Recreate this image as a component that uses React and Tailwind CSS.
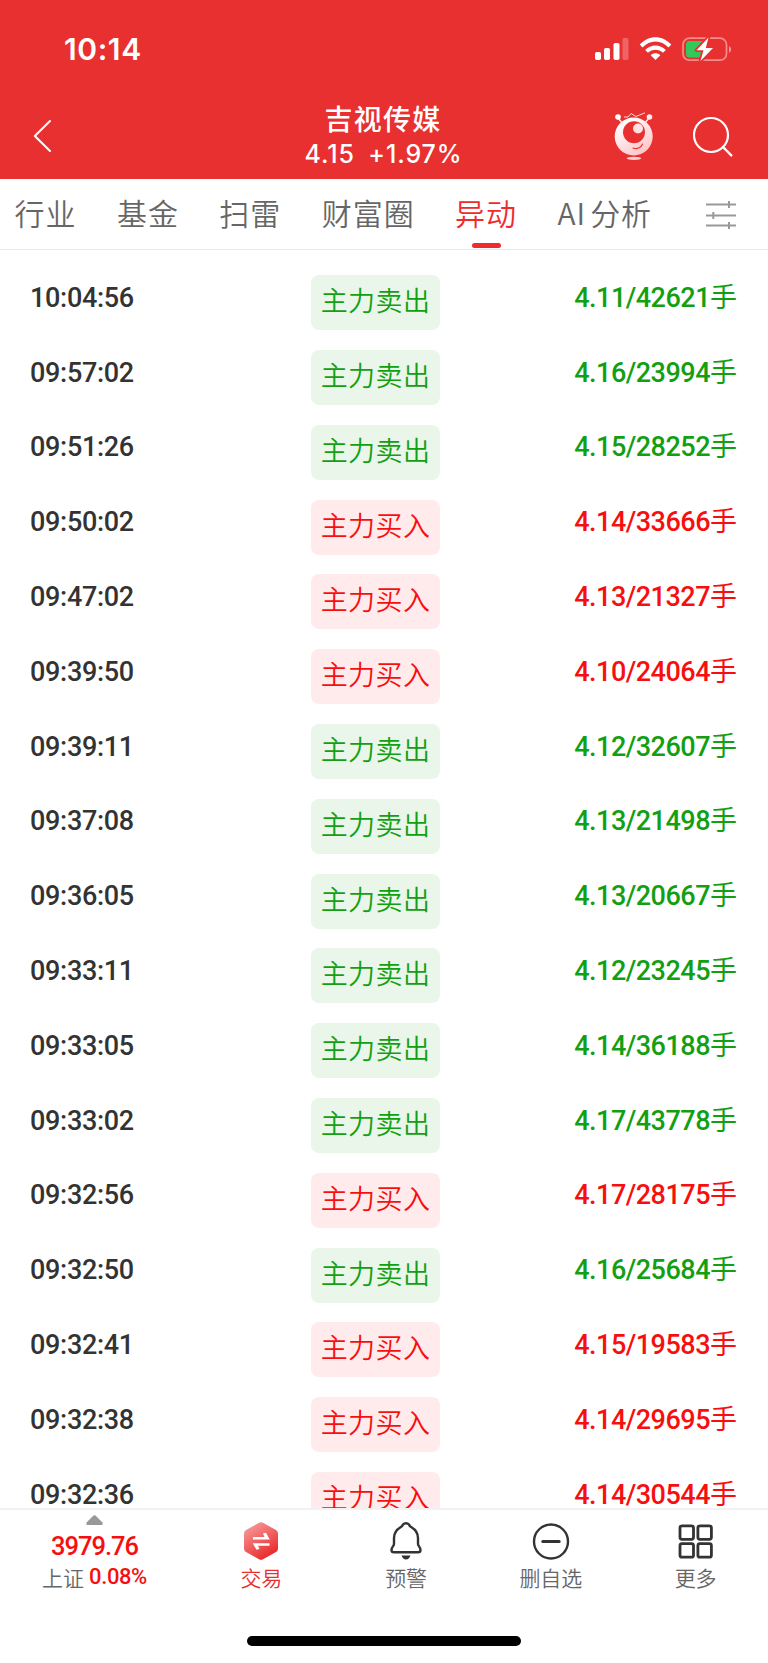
const tradeColors = {
  sell: 'text-[#12a012]',
  buy: 'text-[#f70f0f]',
};

const badgeColors = {
  sell: 'bg-[#eaf6ea] text-[#12a012]',
  buy: 'bg-[#ffebeb] text-[#f70f0f]',
};

const trades = [
  { time: '10:04:56', type: 'sell', value: '4.11/42621' },
  { time: '09:57:02', type: 'sell', value: '4.16/23994' },
  { time: '09:51:26', type: 'sell', value: '4.15/28252' },
  { time: '09:50:02', type: 'buy', value: '4.14/33666' },
  { time: '09:47:02', type: 'buy', value: '4.13/21327' },
  { time: '09:39:50', type: 'buy', value: '4.10/24064' },
  { time: '09:39:11', type: 'sell', value: '4.12/32607' },
  { time: '09:37:08', type: 'sell', value: '4.13/21498' },
  { time: '09:36:05', type: 'sell', value: '4.13/20667' },
  { time: '09:33:11', type: 'sell', value: '4.12/23245' },
  { time: '09:33:05', type: 'sell', value: '4.14/36188' },
  { time: '09:33:02', type: 'sell', value: '4.17/43778' },
  { time: '09:32:56', type: 'buy', value: '4.17/28175' },
  { time: '09:32:50', type: 'sell', value: '4.16/25684' },
  { time: '09:32:41', type: 'buy', value: '4.15/19583' },
  { time: '09:32:38', type: 'buy', value: '4.14/29695' },
  { time: '09:32:36', type: 'buy', value: '4.14/30544' },
];

const tabs = [
  { id: 'industry', label: '行业' },
  { id: 'fund', label: '基金' },
  { id: 'risk', label: '扫雷' },
  { id: 'circle', label: '财富圈' },
  { id: 'moves', label: '异动' },
  { id: 'ai', prefix: 'AI', label: '分析' },
];

function StatusBar() {
  return (
    <div className="flex h-[98px] items-center justify-between pl-[64px] pr-[36px]">
      <span className="font-['Inter',sans-serif] text-[30px] font-semibold leading-none tracking-[0.6px] text-white">
        10:14
      </span>
      <svg width="138" height="26" viewBox="0 0 138 26" fill="none">
        {/* Signal */}
        <rect x="1" y="16" width="6" height="8" rx="1.8" fill="#fff" />
        <rect x="10" y="12" width="6" height="12" rx="1.8" fill="#fff" />
        <rect x="19.5" y="7" width="6" height="17" rx="1.8" fill="#fff" />
        <rect x="28.5" y="2" width="6" height="22" rx="1.8" fill="#fff" fillOpacity=".25" />
        {/* Wifi */}
        <path d="M45.7 8.6C54.5-1.3 68.5-1.3 77.3 8.6L74.5 11.4C67.4 3.4 55.6 3.4 48.5 11.4Z" fill="#fff" />
        <path d="M51.2 14C57 7.9 66 7.9 71.8 14L69 16.8C64.9 12.6 58.1 12.6 54 16.8Z" fill="#fff" />
        <path d="M56.7 19.3C59.5 16.7 63.5 16.7 66.3 19.3L61.5 24Z" fill="#fff" />
        {/* Battery */}
        <rect x="89" y="2.2" width="43.5" height="22" rx="6.5" stroke="#fff" strokeOpacity=".45" strokeWidth="1.7" />
        <rect x="92" y="5" width="18" height="16.5" rx="3.5" fill="#34c759" />
        <path d="M135 10.2C137.8 11.2 137.8 15.6 135 16.6Z" fill="#fff" fillOpacity=".5" />
        <path
          d="M114.5 1.5L102.5 14.3H109.5L106.5 25L119 12H111.8Z"
          fill="#fff"
          stroke="#e93030"
          strokeWidth="3.6"
          strokeLinejoin="round"
          paintOrder="stroke"
        />
      </svg>
    </div>
  );
}

function RobotIcon() {
  return (
    <svg width="42" height="50" viewBox="0 0 42 50" fill="none">
      <defs>
        <linearGradient id="robot" x1="8" y1="10" x2="30" y2="46" gradientUnits="userSpaceOnUse">
          <stop stopColor="#fff" />
          <stop offset="1" stopColor="#ffbfc2" />
        </linearGradient>
      </defs>
      <path d="M5 6L10 12M36 6L31 12" stroke="#ffe4e4" strokeWidth="1.5" />
      <circle cx="5" cy="5" r="2.8" fill="#fff" />
      <circle cx="36.5" cy="5" r="2.8" fill="#ffe9e9" />
      <path d="M11 5L15 5L18 1.5L23 4.5L32 .8" stroke="#ffd6d6" strokeWidth="1" />
      <circle cx="20.7" cy="24.5" r="19" fill="url(#robot)" />
      <circle cx="21" cy="20.2" r="11" fill="#e93030" />
      <circle cx="25" cy="16.5" r="5" fill="#ffe1e1" />
      <path d="M20 36C24 37.5 28 36 29.5 32" stroke="#e93030" strokeWidth="1.2" strokeLinecap="round" />
      <ellipse cx="21" cy="46.3" rx="7.3" ry="1.6" fill="#ffd0d0" />
    </svg>
  );
}

function Header() {
  return (
    <div className="grid h-[81.4px] grid-cols-3 items-center pl-[33px] pr-[35px]">
      <svg width="20" height="34" viewBox="0 0 20 34" fill="none" className="mt-[-5px]">
        <path d="M17 2L1.8 17L17 32" stroke="#fff" strokeWidth="2" strokeLinecap="round" strokeLinejoin="round" />
      </svg>
      <div className="flex flex-col items-center whitespace-nowrap pb-[6px] text-white">
        <h1 className="font-['Noto_Sans_CJK_SC',sans-serif] text-[28px] font-medium leading-[38px] tracking-[1.2px]">
          吉视传媒
        </h1>
        <p className="flex gap-[13.5px] pl-px font-['Inter',sans-serif] text-[25px] font-medium leading-[35px] tracking-[0.9px]">
          <span>4.15</span>
          <span>+1.97%</span>
        </p>
      </div>
      <div className="mt-[-4px] flex items-center justify-end gap-[38px]">
        <RobotIcon />
        <svg width="40" height="42" viewBox="0 0 40 42" fill="none">
          <circle cx="18" cy="19" r="17" stroke="#fff" strokeWidth="2.2" />
          <path d="M30 31L38.3 39.4" stroke="#fff" strokeWidth="2.4" strokeLinecap="round" />
        </svg>
      </div>
    </div>
  );
}

function TabBar({ active }) {
  return (
    <nav className="flex h-[71px] items-start gap-[40.4px] border-b border-[#e9e9e9] pl-[14.5px] pr-[32px] text-[30px] font-[350] tracking-[1px] text-[#666666]">
      {tabs.map((tab) => (
        <div key={tab.id} className="flex shrink-0 flex-col items-center">
          <span className={`h-[64px] leading-[67px] ${tab.id === active ? 'text-[#ee2c2c]' : ''}`}>
            {tab.prefix && <span className="mr-[4px]">{tab.prefix}</span>}
            {tab.label}
          </span>
          {tab.id === active && <span className="h-[5px] w-[29px] rounded-full bg-[#ee2c2c]" />}
        </div>
      ))}
      <svg width="30" height="30" viewBox="0 0 30 30" fill="none" className="ml-auto mt-[21px] shrink-0">
        <path
          d="M0 4.5H30M23 1V8M0 15.5H30M7.3 12V19M0 25.5H30M23 22V29"
          stroke="#999"
          strokeWidth="2"
        />
      </svg>
    </nav>
  );
}

function TradeRow({ trade }) {
  return (
    <li className="grid h-[74.8px] grid-cols-[281px_129px_1fr] items-center text-[27px]">
      <span className="pb-[9px] font-['Roboto',sans-serif] font-medium leading-none tracking-[-0.3px] text-[#333333]">
        {trade.time}
      </span>
      <span
        className={`h-[55px] rounded-lg text-center font-[350] leading-[50px] tracking-[0.4px] ${badgeColors[trade.type]}`}
      >
        {trade.type === 'sell' ? '主力卖出' : '主力买入'}
      </span>
      <span
        className={`pb-[9px] text-right font-['Roboto','Noto_Sans_CJK_SC',sans-serif] font-medium leading-none tracking-[-0.5px] ${tradeColors[trade.type]}`}
      >
        {trade.value}
        <span className="font-normal tracking-normal">手</span>
      </span>
    </li>
  );
}

function TradeIcon() {
  return (
    <svg width="36" height="38" viewBox="0 0 36 38" fill="none">
      <defs>
        <linearGradient id="hexagon" x1="6" y1="2" x2="28" y2="36" gradientUnits="userSpaceOnUse">
          <stop stopColor="#f79a9a" />
          <stop offset="1" stopColor="#e92424" />
        </linearGradient>
      </defs>
      <path
        d="M16 .8Q18 -.2 20 .8L33 8Q35 9.2 35 11.5V26.5Q35 28.8 33 30L20 37.2Q18 38.2 16 37.2L3 30Q1 28.8 1 26.5V11.5Q1 9.2 3 8Z"
        fill="url(#hexagon)"
      />
      <path d="M10 15H21.5L20 11.5L23 10.8L26.8 17.6H10Z" fill="#fff" />
      <path d="M26.5 23.8H15L16.5 27L13.5 27.8L9.7 21.2H26.5Z" fill="#fff" />
    </svg>
  );
}

function BellIcon() {
  return (
    <svg width="32" height="38" viewBox="0 0 32 38" fill="none">
      <path
        d="M13 2.5C14.5 .8 17.5 .8 19 2.5C19.5 4 20 4.5 21.5 5.3C26 8 28 12 28 16V22C28 24 30.5 25 30.5 28C30.5 29.5 29.5 30.3 28 30.3H4C2.5 30.3 1.5 29.5 1.5 28C1.5 25 4 24 4 22V16C4 12 6 8 10.5 5.3C12 4.5 12.5 4 13 2.5Z"
        stroke="#333"
        strokeWidth="2.4"
        strokeLinejoin="round"
      />
      <path d="M11.5 33.5H20.5C19.5 36.3 18 37.5 16 37.5C14 37.5 12.5 36.3 11.5 33.5Z" fill="#333" />
    </svg>
  );
}

function RemoveIcon() {
  return (
    <svg width="38" height="38" viewBox="0 0 38 38" fill="none" stroke="#333" strokeLinecap="round">
      <circle cx="19" cy="19.5" r="17" strokeWidth="2.4" />
      <path d="M10.8 19.5H27.2" strokeWidth="3" />
    </svg>
  );
}

function MoreIcon() {
  return (
    <svg width="36" height="38" viewBox="0 0 36 38" fill="none" stroke="#333" strokeWidth="2.8">
      <rect x="2" y="3.8" width="13.5" height="13.5" rx="2" />
      <rect x="19.9" y="3.8" width="13.5" height="13.5" rx="2" />
      <rect x="2" y="21.7" width="13.5" height="13.5" rx="2" />
      <rect x="19.9" y="21.7" width="13.5" height="13.5" rx="2" />
    </svg>
  );
}

const actions = [
  { label: '交易', icon: <TradeIcon />, color: 'text-[#e93030]' },
  { label: '预警', icon: <BellIcon />, color: 'text-[#666666]' },
  { label: '删自选', icon: <RemoveIcon />, color: 'text-[#666666]' },
  { label: '更多', icon: <MoreIcon />, color: 'text-[#666666]' },
];

function BottomBar() {
  return (
    <footer className="h-[155px] border-t-2 border-[#f2f2f2] bg-white">
      <div className="grid h-[126px] grid-cols-[189px_repeat(4,144.75px)] pt-[5px]">
        <div className="flex flex-col items-center">
          <svg width="17" height="10" viewBox="0 0 17 10">
            <path d="M7.5 .5Q8.5 -.2 9.5 .5L16.5 7.5V10H.5V7.5Z" fill="#999" />
          </svg>
          <span className="mt-[7px] font-['Roboto',sans-serif] text-[25.5px] font-medium leading-[28px] tracking-[-1px] text-[#f70f0f]">
            3979.76
          </span>
          <span className="mt-[1px] flex items-center gap-[5px] text-[21px] font-[350] leading-[32px] text-[#666666]">
            上证
            <span className="font-['Roboto',sans-serif] text-[22px] font-medium tracking-[-0.4px] text-[#f70f0f]">
              0.08%
            </span>
          </span>
        </div>
        {actions.map((action) => (
          <div key={action.label} className="flex flex-col items-center pt-[7px]">
            {action.icon}
            <span className={`mt-[1px] text-[21px] font-[350] leading-[32px] ${action.color}`}>{action.label}</span>
          </div>
        ))}
      </div>
      <div className="mx-auto h-[10px] w-[274px] rounded-full bg-black" />
    </footer>
  );
}

export default function App() {
  return (
    <div className="flex h-[1663px] w-[768px] flex-col overflow-hidden bg-white font-['Noto_Sans_CJK_SC',sans-serif]">
      <header className="bg-[#e93030]">
        <StatusBar />
        <Header />
      </header>
      <TabBar active="moves" />
      <ul className="min-h-0 flex-1 overflow-hidden pl-[30px] pr-[31px] pt-[15px]">
        {trades.map((trade) => (
          <TradeRow key={trade.time} trade={trade} />
        ))}
      </ul>
      <BottomBar />
    </div>
  );
}
